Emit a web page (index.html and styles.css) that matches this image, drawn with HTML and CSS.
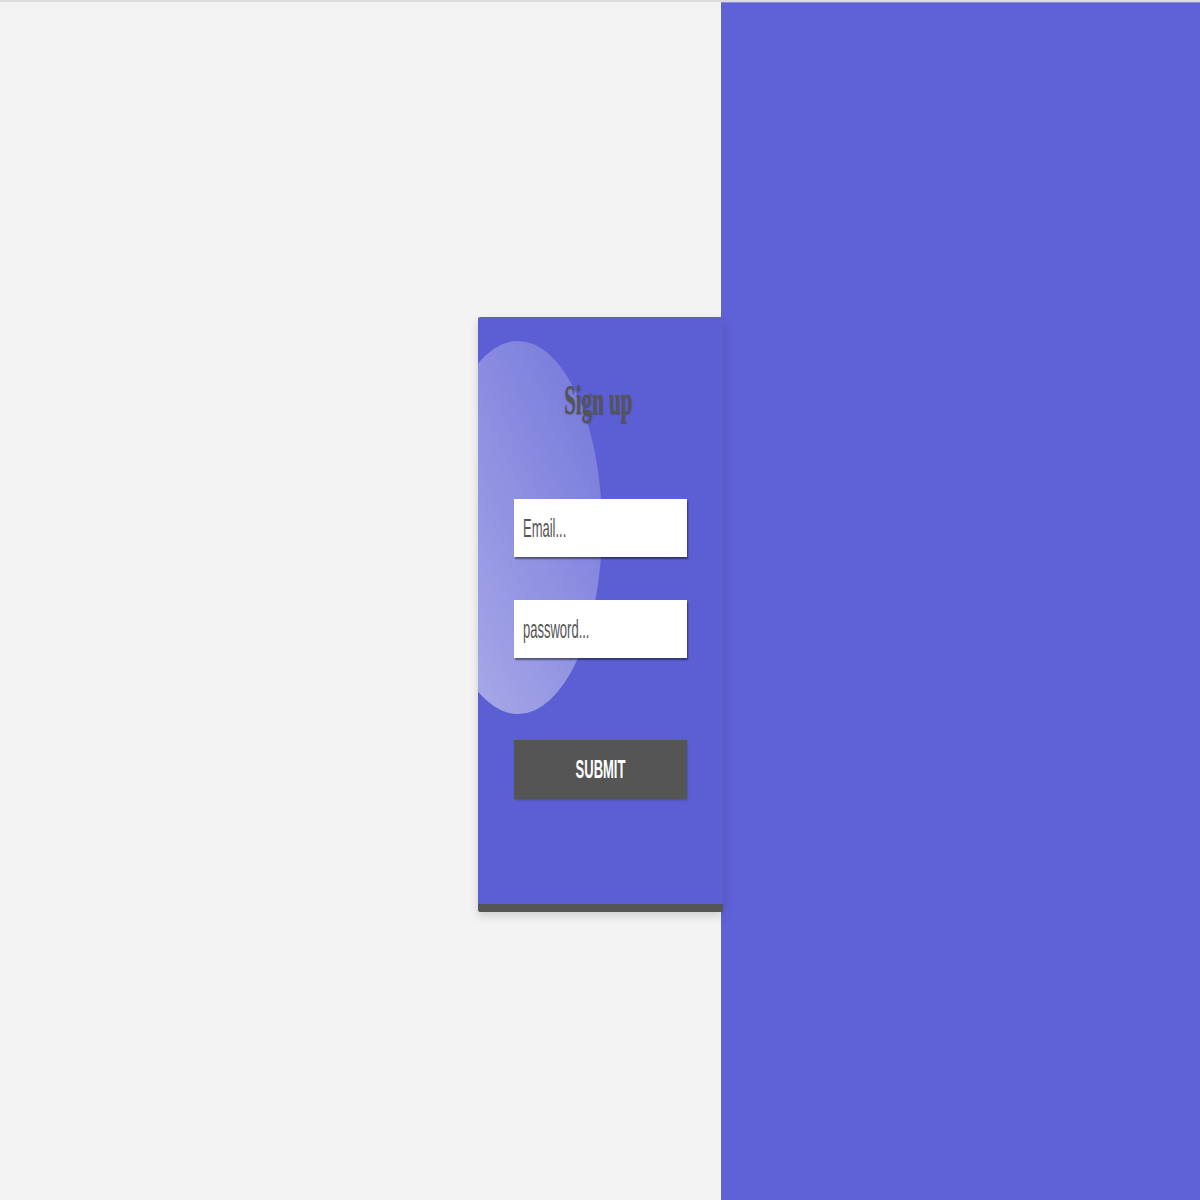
FILE: index.html
```html
<!DOCTYPE html>
<html lang="en">
  <head>
    <meta charset="UTF-8">
    <meta name="viewport" content="width=device-width, initial-scale=1.0">
    <title>Sign up</title>
    <link rel="stylesheet" href="styles.css">
  </head>
  <body>
    <div class="page">
      <div class="side-panel"></div>
      <form class="signup-card" onsubmit="return false">
        <h1 class="title"><span>Sign up</span></h1>
        <div class="field">
          <input type="email" placeholder="Email...">
        </div>
        <div class="field">
          <input type="password" placeholder="password...">
        </div>
        <div class="field submit-field">
          <button type="submit">SUBMIT</button>
        </div>
      </form>
    </div>
  </body>
</html>
```

FILE: styles.css
```css
html, body {
    margin: 0;
    padding: 0;
}
body {
    background: #f3f3f3;
    border-top: 2px solid #dcdcdc;
    font-family: 'Liberation Sans', Arial, sans-serif;
}
.page {
    display: grid;
    grid-template-columns: 721px 1fr;
    height: 1198px;
}
.side-panel {
    grid-column: 2;
    grid-row: 1;
    background: #5f61d6;
    border-top: 1px solid #8a8ce2;
}
.signup-card {
    grid-column: 1 / 3;
    grid-row: 1;
    justify-self: start;
    align-self: start;
    z-index: 1;
    position: relative;
    overflow: hidden;
    box-sizing: border-box;
    width: 245px;
    height: 595px;
    margin: 315px 0 0 478px;
    padding: 0 36px;
    background: #5c5fd4;
    border-bottom: 8px solid #555;
    border-radius: 2px;
    box-shadow: 0 4px 10px rgba(0,0,0,0.15);
}
/* soft bubble behind the form */
.signup-card::before {
    content: '';
    position: absolute;
    left: -44px;
    top: 24px;
    width: 168px;
    height: 373px;
    border-radius: 50%;
    background: linear-gradient(to bottom left, rgba(255,255,255,0.14), rgba(255,255,255,0.5));
}
.title {
    position: relative;
    margin: 0;
    height: 182px;
    text-align: center;
    font-family: 'Liberation Serif', 'Times New Roman', serif;
    font-size: 42px;
    font-weight: bold;
    color: #555;
    line-height: 1;
}
.title span {
    display: inline-block;
    margin-top: 62px;
    margin-left: -4px;
    transform: scaleX(0.5);
    text-shadow: 0 1px 2px rgba(0,0,0,0.25);
}
.field {
    position: relative;
    width: 173px;
    height: 58px;
    margin-bottom: 43px;
}
.field input,
.field button {
    display: block;
    width: 346px;
    height: 58px;
    margin: 0;
    box-sizing: border-box;
    border: none;
    outline: none;
    transform: scaleX(0.5);
    transform-origin: 0 0;
    font-family: 'Liberation Sans', Arial, sans-serif;
}
.field input {
    padding: 0 18px;
    background: #fff;
    font-size: 26px;
    color: #555;
    box-shadow: 2px 2px 2px rgba(0,0,0,0.45);
}
.field input::placeholder {
    color: #555;
}
.submit-field {
    margin-top: 82px;
    height: 59px;
}
.field button {
    height: 59px;
    background: #555;
    color: #fff;
    font-size: 26px;
    font-weight: bold;
    box-shadow: 1px 1px 3px rgba(0,0,0,0.25);
    cursor: pointer;
}
```
